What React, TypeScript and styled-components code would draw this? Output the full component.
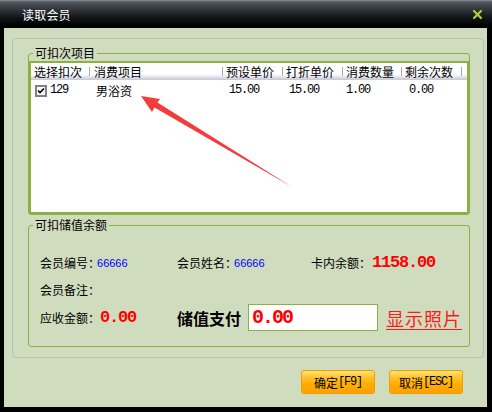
import React from "react";
import styled, { createGlobalStyle } from "styled-components";

const GREEN = "#8cb043";

const GlobalStyle = createGlobalStyle`
  html, body { margin: 0; padding: 0; background: #000; }
  body {
    font-family: "Noto Sans CJK SC", "Liberation Sans", sans-serif;
    font-size: 12px;
    color: #000;
  }
  * { box-sizing: border-box; }
`;

const Window = styled.div`
  width: 492px;
  height: 412px;
  background: #000;
  display: flex;
  flex-direction: column;
  overflow: hidden;
`;

const TitleBar = styled.div`
  height: 28px;
  flex: none;
  display: flex;
  align-items: center;
  justify-content: space-between;
  padding: 0 10px 0 22px;
  background: linear-gradient(
    #9aa0a8 0px,
    #646a72 1px,
    #4c5259 3px,
    #2a2f34 11px,
    #0e1114 19px,
    #000 26px
  );
`;

const Title = styled.span`
  color: #fff;
  font-size: 12px;
  line-height: 14px;
  margin-top: 2px;
  letter-spacing: 0.2px;
`;

const CloseIcon = styled.svg`
  width: 9px;
  height: 9px;
  display: block;
  margin-top: 1px;
`;

const Body = styled.div`
  flex: 1;
  margin: 0 5px 5px 4px;
  background: #d0dcbe;
  padding: 10px 3px 0 8px;
  display: flex;
  flex-direction: column;
`;

const Panel = styled.div`
  border: 1px solid #bcbcbc;
  border-radius: 4px;
  padding: 7px 13px 10px 15px;
  display: flex;
  flex-direction: column;
  gap: 3px;
`;

const Group = styled.fieldset<{ $pad?: string }>`
  margin: 0;
  min-width: 0;
  border: 1px solid ${GREEN};
  border-radius: 3px;
  padding: ${(p) => p.$pad ?? "0"};
`;

const Legend = styled.legend`
  margin-left: 4px;
  padding: 0 2px;
  font-size: 12px;
  line-height: 14px;
  color: #000;
`;

const List = styled.div`
  position: relative;
  margin-top: 1px;
  height: 153px;
  background: #fff;
  border: 2px solid ${GREEN};
  border-top-width: 2px;
  margin-left: -0px;
`;

const HeaderRow = styled.div`
  display: flex;
  height: 17px;
  align-items: center;
  background: linear-gradient(
    #fff 0px,
    #fff 11px,
    #eeeef4 13px,
    #d8d8e4 15px,
    #c6c6d6 17px
  );
`;

const HeaderCell = styled.div<{ $w: number; $pad: number }>`
  position: relative;
  width: ${(p) => p.$w}px;
  flex: none;
  padding-left: ${(p) => p.$pad}px;
  line-height: 17px;
  white-space: nowrap;
  &::after {
    content: "";
    position: absolute;
    right: -1px;
    top: 4px;
    width: 1px;
    height: 9px;
    background: #a8a8b0;
    box-shadow: 1px 0 0 #fff;
  }
`;

const DataRow = styled.div`
  display: flex;
  height: 18px;
  align-items: center;
  margin-top: 1px;
`;

const DataCell = styled.div<{ $w: number; $pad: number; $num?: boolean }>`
  width: ${(p) => p.$w}px;
  flex: none;
  display: flex;
  align-items: center;
  padding-left: ${(p) => p.$pad}px;
  white-space: nowrap;
  font-family: ${(p) =>
    p.$num
      ? `"Liberation Mono", monospace`
      : `"Noto Sans CJK SC", "Liberation Sans", sans-serif`};
  letter-spacing: ${(p) => (p.$num ? "-1.2px" : "0")};
  font-size: 12px;
`;

const CheckBox = styled.svg`
  width: 12px;
  height: 12px;
  display: block;
  margin-right: 3px;
  margin-top: 2px;
`;

const NumText = styled.span`
  font-family: "Liberation Mono", monospace;
  letter-spacing: -1.2px;
  font-size: 12px;
`;

const Arrow = styled.svg`
  position: absolute;
  left: 0;
  top: 0;
  width: 300px;
  height: 140px;
  pointer-events: none;
`;

const InfoGrid = styled.div`
  display: grid;
  grid-template-columns: 137px 134px 1fr;
  row-gap: 9px;
  padding-left: 11px;
`;

const Field = styled.div`
  display: flex;
  align-items: center;
  height: 18px;
  white-space: nowrap;
`;

const Label = styled.span<{ $space?: number }>`
  font-size: 12px;
  line-height: 18px;
  margin-right: ${(p) => p.$space ?? 0}px;
`;

const BlueNum = styled.span`
  font-family: "Liberation Sans", sans-serif;
  font-size: 11px;
  color: #0000ff;
`;

const RedAmount = styled.span`
  font-family: "Liberation Mono", monospace;
  font-weight: bold;
  font-size: 17px;
  letter-spacing: -1.2px;
  color: #ff0000;
  line-height: 18px;
`;

const PayRow = styled.div`
  display: flex;
  align-items: center;
  height: 27px;
  margin-top: 5px;
  padding-left: 11px;
  white-space: nowrap;
`;

const PayDue = styled.div`
  width: 137px;
  flex: none;
  display: flex;
  align-items: center;
`;

const PayLabel = styled.span`
  font-size: 16px;
  font-weight: bold;
  width: 71px;
  flex: none;
  line-height: 20px;
`;

const PayInput = styled.div`
  width: 130px;
  height: 27px;
  flex: none;
  background: #fff;
  border: 1px solid ${GREEN};
  display: flex;
  align-items: center;
  padding-left: 3px;
  font-family: "Liberation Mono", monospace;
  font-weight: bold;
  font-size: 20px;
  letter-spacing: -2px;
  color: #ff0000;
`;

const PhotoLink = styled.span`
  margin-left: 8px;
  font-size: 18px;
  letter-spacing: 1px;
  color: #ff1a1a;
  text-decoration: underline;
  text-underline-offset: 3px;
  line-height: 22px;
`;

const ButtonBar = styled.div`
  display: flex;
  justify-content: flex-end;
  gap: 14px;
  margin-top: 12px;
  padding-right: 21px;
`;

const Button = styled.div`
  width: 74px;
  height: 24px;
  border: 1px solid #eea000;
  border-radius: 3px;
  background: linear-gradient(#ffe27a 0%, #ffc22a 30%, #ffae00 60%, #ffa000 100%);
  display: flex;
  align-items: center;
  justify-content: center;
  font-size: 12px;
  color: #000;
  white-space: nowrap;
`;

const BtnKey = styled.span`
  font-family: "Liberation Mono", monospace;
  font-size: 12px;
  letter-spacing: -1.2px;
`;

const cols = [58, 133, 60, 60, 59, 60];
const headers = ["选择扣次", "消费项目", "预设单价", "打折单价", "消费数量", "剩余次数"];
const headPads = [3, 5, 4, 4, 4, 4];

export default function App() {
  return (
    <>
      <GlobalStyle />
      <Window>
        <TitleBar>
          <Title>读取会员</Title>
          <CloseIcon viewBox="0 0 9 9">
            <path
              d="M1 1 L8 8 M8 1 L1 8"
              stroke="#a8d23a"
              strokeWidth="2.2"
              strokeLinecap="square"
            />
          </CloseIcon>
        </TitleBar>
        <Body>
          <Panel>
            <Group>
              <Legend>可扣次项目</Legend>
              <List>
                <HeaderRow>
                  {headers.map((h, i) => (
                    <HeaderCell key={h} $w={cols[i]} $pad={headPads[i]}>
                      {h}
                    </HeaderCell>
                  ))}
                </HeaderRow>
                <DataRow>
                  <DataCell $w={cols[0]} $pad={4}>
                    <CheckBox viewBox="0 0 12 12">
                      <rect x="0" y="0" width="12" height="12" fill="#808080" />
                      <rect x="2" y="2" width="8" height="8" fill="#fff" />
                      <path
                        d="M3 5.5 L5 7.5 L9 3.5"
                        stroke="#000"
                        strokeWidth="1.6"
                        fill="none"
                      />
                    </CheckBox>
                    <NumText>129</NumText>
                  </DataCell>
                  <DataCell $w={cols[1]} $pad={7}>男浴资</DataCell>
                  <DataCell $w={cols[2]} $pad={7} $num>15.00</DataCell>
                  <DataCell $w={cols[3]} $pad={7} $num>15.00</DataCell>
                  <DataCell $w={cols[4]} $pad={4} $num>1.00</DataCell>
                  <DataCell $w={cols[5]} $pad={8} $num>0.00</DataCell>
                </DataRow>
                <Arrow viewBox="0 0 300 140">
                  <polygon
                    points="110,33 129,36 126.5,39.5 261,124 123.5,44.5 121,49"
                    fill="#f43c3c"
                  />
                </Arrow>
              </List>
            </Group>
            <Group $pad="22px 0 15px 0">
              <Legend>可扣储值余额</Legend>
              <InfoGrid>
                <Field>
                  <Label $space={-3}>会员编号：</Label>
                  <BlueNum>66666</BlueNum>
                </Field>
                <Field>
                  <Label $space={-3}>会员姓名：</Label>
                  <BlueNum>66666</BlueNum>
                </Field>
                <Field>
                  <Label $space={1}>卡内余额：</Label>
                  <RedAmount>1158.00</RedAmount>
                </Field>
                <Field>
                  <Label>会员备注：</Label>
                </Field>
              </InfoGrid>
              <PayRow>
                <PayDue>
                  <Label>应收金额：</Label>
                  <RedAmount>0.00</RedAmount>
                </PayDue>
                <PayLabel>储值支付</PayLabel>
                <PayInput>0.00</PayInput>
                <PhotoLink>显示照片</PhotoLink>
              </PayRow>
            </Group>
          </Panel>
          <ButtonBar>
            <Button>
              确定<BtnKey>[F9]</BtnKey>
            </Button>
            <Button>
              取消<BtnKey>[ESC]</BtnKey>
            </Button>
          </ButtonBar>
        </Body>
      </Window>
    </>
  );
}
